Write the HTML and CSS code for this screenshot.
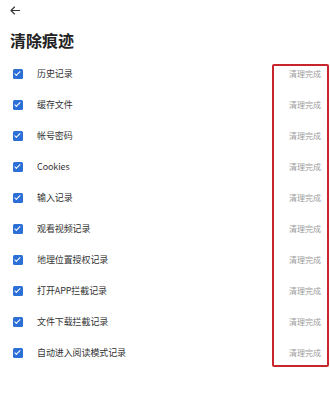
FILE: index.html
```html
<!DOCTYPE html>
<html lang="zh-CN">
<head>
  <meta charset="UTF-8">
  <meta name="viewport" content="width=device-width, initial-scale=1.0">
  <title>清除痕迹</title>
  <link rel="stylesheet" href="styles.css">
</head>
<body>

  <!-- Top bar -->
  <div class="topbar">
    <svg class="back" width="10" height="9" viewBox="0 0 10 9">
      <path d="M9.5 4.5H1M4.5 1L1 4.5L4.5 8" fill="none" stroke="#333" stroke-width="1.1" stroke-linecap="round" stroke-linejoin="round"/>
    </svg>
  </div>

  <h1 class="title">清除痕迹</h1>

  <!-- Items -->
  <div class="list">
    <div class="row"><span class="check"></span><span class="label">历史记录</span><span class="status">清理完成</span></div>
    <div class="row"><span class="check"></span><span class="label">缓存文件</span><span class="status">清理完成</span></div>
    <div class="row"><span class="check"></span><span class="label">帐号密码</span><span class="status">清理完成</span></div>
    <div class="row"><span class="check"></span><span class="label">Cookies</span><span class="status">清理完成</span></div>
    <div class="row"><span class="check"></span><span class="label">输入记录</span><span class="status">清理完成</span></div>
    <div class="row"><span class="check"></span><span class="label">观看视频记录</span><span class="status">清理完成</span></div>
    <div class="row"><span class="check"></span><span class="label">地理位置授权记录</span><span class="status">清理完成</span></div>
    <div class="row"><span class="check"></span><span class="label">打开APP拦截记录</span><span class="status">清理完成</span></div>
    <div class="row"><span class="check"></span><span class="label">文件下载拦截记录</span><span class="status">清理完成</span></div>
    <div class="row"><span class="check"></span><span class="label">自动进入阅读模式记录</span><span class="status">清理完成</span></div>

    <!-- highlight frame over the status column -->
    <div class="highlight"></div>
  </div>

</body>
</html>
```

FILE: styles.css
```css
/* General styling */
body {
  font-family: "Noto Sans CJK SC", "Noto Sans", sans-serif;
  margin: 0;
  padding: 0;
  background-color: #fff;
  color: #333;
}

/* Top bar */
.topbar {
  height: 20px;
  padding-left: 10px;
  display: flex;
  align-items: center;
}

.back {
  display: block;
}

/* Title */
.title {
  margin: 10px 0 0 10px;
  font-size: 16px;
  line-height: 20px;
  font-weight: bold;
  color: #222;
}

/* List */
.list {
  position: relative;
  margin-top: 8px;
}

.row {
  height: 31px;
  display: flex;
  align-items: center;
  padding: 0 9px 0 13px;
}

.check {
  width: 10px;
  height: 10px;
  border-radius: 1.5px;
  background-color: #2c6fd6;
  position: relative;
  flex-shrink: 0;
}

.check::after {
  content: "";
  position: absolute;
  left: 3.3px;
  top: 1.3px;
  width: 2.4px;
  height: 4.6px;
  border: solid #fff;
  border-width: 0 1.3px 1.3px 0;
  transform: rotate(45deg);
}

.label {
  margin-left: 14px;
  font-size: 9px;
  letter-spacing: -0.1px;
  color: #333;
}

.status {
  margin-left: auto;
  font-size: 8px;
  color: #9c9c9c;
}

/* Red frame */
.highlight {
  position: absolute;
  left: 272px;
  top: 6px;
  width: 53px;
  height: 299px;
  border: 2px solid #c8262c;
  border-radius: 2px;
}
```
